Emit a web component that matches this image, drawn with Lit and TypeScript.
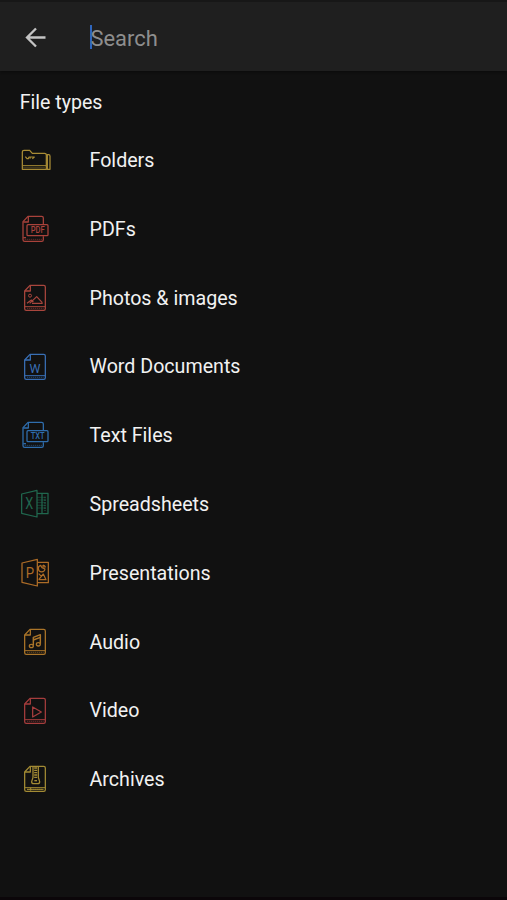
import { LitElement, html, svg, css, type TemplateResult } from "lit";
import { customElement, property } from "lit/decorators.js";

const page = svg`
  <path d="M60 22H101Q106 22 106 27V92Q106 97 101 97H49Q44 97 44 92V39Z"/>
  <path d="M61 23V39H45"/>
  <path d="M45 86H105" stroke-width="3"/>
  <path class="fine" d="M51 91H101" stroke-dasharray="4 2"/>`;

const taggedPage = (tag: string) => svg`
  <path d="M100 46V27Q100 22 95 22H54L39 38V92Q39 97 44 97H95Q100 97 100 92V82"/>
  <path d="M55 23V39H40"/>
  <path d="M40 86H48"/>
  <path class="fine" d="M44 91H96" stroke-dasharray="4 2"/>
  <rect x="51" y="47" width="63" height="33" rx="3"/>
  <text x="83" y="72.5" font-size="25" textLength="42" lengthAdjust="spacingAndGlyphs">${tag}</text>`;

const icons: Record<string, TemplateResult> = {
  folder: svg`
    <path d="M37 88V36Q37 31 42 31H59L67 40H104Q109 40 109 45V88Z"/>
    <path d="M109 44H116Q120 44 120 49V88H109M112 44V88"/>
    <path d="M38 77H108" stroke-width="3"/>
    <path class="fine" d="M40 83H106" stroke-dasharray="4 2"/>
    <path d="M46 50L51 56H55L57 51H61L60 56M61 51H73L67 56" stroke-width="3.6"/>`,
  pdf: taggedPage("PDF"),
  image: svg`${page}
    <circle cx="60" cy="53" r="4.5" stroke-width="3"/>
    <path d="M51 76L64 66L70 72M59 76L80 56L97 74M66 76H98" stroke-width="3.6"/>`,
  word: svg`${page}<text class="letter" x="75" y="77" font-size="37">W</text>`,
  text: taggedPage("TXT"),
  sheet: svg`
    <path d="M35 30L81 19V99L35 88Z"/>
    <path d="M81 28H114V89H81M96 29V88"/>
    <path d="M81 40H104M81 48H104M81 56H104M81 64H104M81 72H104" class="fine"/>
    <path d="M105 38V80" stroke-dasharray="5 3" stroke-width="4"/>
    <text class="letter" x="58" y="76" font-size="47" textLength="24" lengthAdjust="spacingAndGlyphs">X</text>`,
  slides: svg`
    <path d="M36 30L82 19V99L36 88Z"/>
    <path d="M82 28H115V89H82"/>
    <text class="letter" x="60" y="76" font-size="46" textLength="25" lengthAdjust="spacingAndGlyphs">P</text>
    <path d="M92 37A10 10 0 1 0 105 48L96 44Z" stroke-width="3.6"/>
    <path d="M99 36V42H106A8 8 0 0 0 99 36M86 80H108L100 63L86 80M86 62L94 70" stroke-width="3.6"/>`,
  audio: svg`${page}
    <path d="M70 70V46L91 38V65M70 54L91 46" stroke-width="4.4"/>
    <ellipse cx="64" cy="72" rx="6" ry="5"/>
    <ellipse cx="85" cy="67" rx="6" ry="5"/>`,
  video: svg`${page}<path d="M68 48L94 63L68 78Z"/>`,
  archive: svg`${page}
    <path d="M69 23V55L65 68Q65 74 71 74H83Q89 74 89 68L85 55V23"/>
    <path d="M77 25V58" stroke-dasharray="4 3" stroke-width="9"/>
    <path d="M73 65H81" stroke-width="4"/>
    <path d="M51 91H100M62 86V95" stroke-width="3"/>`,
};

const fileTypes = [
  ["folder", "#a88b35", "Folders"],
  ["pdf", "#a9423b", "PDFs"],
  ["image", "#a9463d", "Photos & images"],
  ["word", "#396fb5", "Word Documents"],
  ["text", "#2f6eae", "Text Files"],
  ["sheet", "#20674e", "Spreadsheets"],
  ["slides", "#ad6c27", "Presentations"],
  ["audio", "#ab7529", "Audio"],
  ["video", "#a63d3d", "Video"],
  ["archive", "#a38b34", "Archives"],
];

@customElement("file-type-row")
class FileTypeRow extends LitElement {
  @property() icon = "";
  @property() color = "";
  @property() label = "";

  static styles = css`
    :host {
      display: flex;
      align-items: center;
      height: 68.8px;
      padding-left: 10px;
    }
    svg {
      width: 50px;
      height: 40px;
      margin: 0 29.5px 1.6px 0;
      fill: none;
      stroke: currentColor;
      stroke-width: 3.8;
      stroke-linejoin: round;
    }
    .fine {
      stroke-width: 2.5;
      opacity: 0.65;
    }
    text {
      fill: currentColor;
      stroke: none;
      font-family: Roboto, sans-serif;
      font-weight: 500;
      text-anchor: middle;
    }
    .letter {
      font-weight: 400;
    }
    .label {
      color: #f2f2f2;
      font-size: 19.65px;
      line-height: 24px;
    }
  `;

  render() {
    return html`
      <svg viewBox="0 0 150 120" style="color:${this.color}">${icons[this.icon]}</svg>
      <span class="label">${this.label}</span>
    `;
  }
}

@customElement("app-root")
class AppRoot extends LitElement {
  static styles = css`
    :host {
      display: flex;
      flex-direction: column;
      box-sizing: border-box;
      height: 900px;
      background: #111111;
      border-bottom: 3px solid #0b0609;
      font-family: Roboto, sans-serif;
      overflow: hidden;
    }
    header {
      display: flex;
      align-items: center;
      box-sizing: border-box;
      height: 71px;
      flex: none;
      padding: 3px 0 0 20px;
      background: #1f1f1f;
      border-top: 2px solid #171717;
      box-shadow: 0 1px 2px #0b0b0b;
    }
    .back {
      width: 30px;
      height: 30px;
      margin-right: 39px;
      fill: none;
      stroke: #c4c4c4;
      stroke-width: 2.3;
    }
    .caret {
      width: 2px;
      height: 24px;
      margin: 0 -1px 2px 0.5px;
      background: #2f66bd;
    }
    .placeholder {
      margin-top: 2px;
      color: #8e8e8e;
      font-size: 21.9px;
      line-height: 28px;
    }
    h1 {
      margin: 0;
      height: 55.7px;
      flex: none;
      padding: 20px 0 0 19.7px;
      box-sizing: border-box;
      color: #f2f2f2;
      font-size: 19.6px;
      font-weight: 400;
      line-height: 24px;
    }
  `;

  render() {
    return html`
      <header>
        <svg class="back" viewBox="0 0 30 30"><path d="M25.5 14.5H8M16 5.5L7 14.5L16 23.5" /></svg>
        <span class="caret"></span>
        <span class="placeholder">Search</span>
      </header>
      <h1>File types</h1>
      ${fileTypes.map(
        ([icon, color, label]) =>
          html`<file-type-row .icon=${icon} .color=${color} .label=${label}></file-type-row>`
      )}
    `;
  }
}
